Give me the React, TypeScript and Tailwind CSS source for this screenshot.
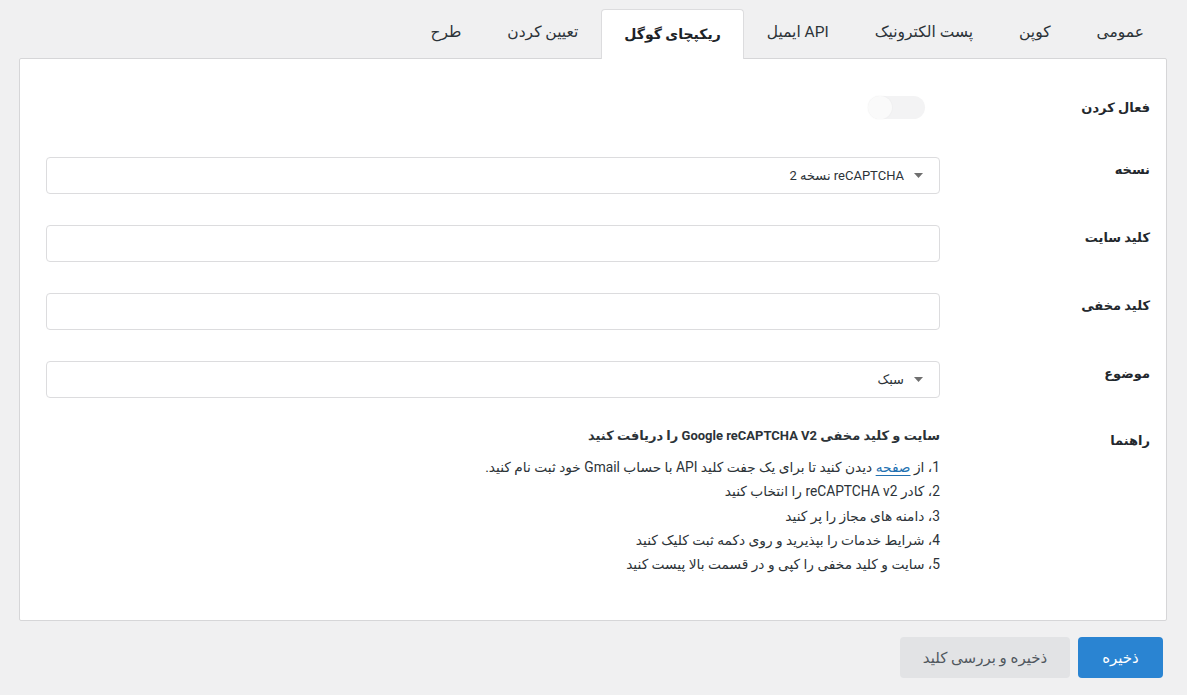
import { useState } from 'react'

const tabs = ['عمومی', 'کوپن', 'پست الکترونیک', 'API ایمیل', 'ریکپچای گوگل', 'تعیین کردن', 'طرح']

const steps = [
  '2، کادر reCAPTCHA v2 را انتخاب کنید',
  '3، دامنه های مجاز را پر کنید',
  '4، شرایط خدمات را بپذیرید و روی دکمه ثبت کلیک کنید',
  '5، سایت و کلید مخفی را کپی و در قسمت بالا پیست کنید',
]

function Row({ label, children }: { label: string; children: React.ReactNode }) {
  return (
    <div className="flex items-start">
      <div className="w-[210px] shrink-0 pt-[3px] text-[13px] font-bold text-[#23282d]">{label}</div>
      <div className="flex-1">{children}</div>
    </div>
  )
}

function Select({ value }: { value: string }) {
  return (
    <div className="h-[37px] w-full bg-white border border-[#dcdcde] rounded-[4px] flex items-center pr-[16px] gap-[10px] text-[13px] text-[#2c3338]">
      <svg width="9" height="5" viewBox="0 0 9 5" className="shrink-0">
        <path d="M0 0h9L4.5 5z" fill="#6f6f6f" />
      </svg>
      <span>{value}</span>
    </div>
  )
}

function Input() {
  return <div className="h-[37px] w-full bg-white border border-[#dcdcde] rounded-[4px]" />
}

export default function App() {
  const [active] = useState(4)

  return (
    <div
      dir="rtl"
      className="min-h-[695px] bg-[#f0f0f1] pt-[8px] pr-[20px] pl-[19px] font-['Roboto','DejaVu_Sans',sans-serif] text-[#2c3338]"
    >
      <div className="flex">
        {tabs.map((t, i) => (
          <div
            key={t}
            className={
              i === active
                ? 'h-[50px] px-[22px] flex items-center text-[14px] font-bold text-[#1d2327] bg-white border border-[#dcdcde] border-b-0 rounded-t-[4px] relative top-[1px]'
                : 'h-[50px] px-[23px] flex items-center text-[15.5px] text-[#2c3338]'
            }
          >
            {t}
          </div>
        ))}
      </div>

      <div className="bg-white border border-[#d6d6d8] rounded-[2px] pt-[30px] pb-[44px] pr-[16px] pl-[26px] flex flex-col gap-[31px]">
        <div className="flex items-center h-[37px]">
          <div className="w-[210px] shrink-0 text-[13px] font-bold text-[#23282d]">فعال کردن</div>
          <div className="w-[57px] h-[23px] mr-[15px] rounded-full bg-[#f3f3f4] flex items-center justify-end">
            <div className="w-[24px] h-[23px] rounded-full bg-[#fafafa] shadow-[0_0_2px_rgba(0,0,0,0.05)]" />
          </div>
        </div>

        <Row label="نسخه">
          <Select value="reCAPTCHA نسخه 2" />
        </Row>
        <Row label="کلید سایت">
          <Input />
        </Row>
        <Row label="کلید مخفی">
          <Input />
        </Row>
        <Row label="موضوع">
          <Select value="سبک" />
        </Row>

        <div className="flex items-start -mt-[3px]">
          <div className="w-[210px] shrink-0 pt-[5px] text-[13px] font-bold text-[#23282d]">راهنما</div>
          <div className="flex-1 text-[13.75px] text-[#2c3338]">
            <div className="font-bold text-[13px] leading-[20px] mb-[9px]">
              سایت و کلید مخفی Google reCAPTCHA V2 را دریافت کنید
            </div>
            <div className="leading-[24.25px]">
              <div>
                1، از{' '}
                <span className="text-[#2271b1] underline underline-offset-[3px]">صفحه</span>
                {' '}دیدن کنید تا برای یک جفت کلید API با حساب Gmail خود ثبت نام کنید.
              </div>
              {steps.map((s) => (
                <div key={s}>{s}</div>
              ))}
            </div>
          </div>
        </div>
      </div>

      <div className="flex gap-[8px] mt-[16px] pr-[4px]">
        <button className="h-[41px] w-[85px] rounded-[4px] bg-[#2a84d2] text-white text-[15px]">ذخیره</button>
        <button className="h-[41px] w-[170px] rounded-[4px] bg-[#e2e3e5] text-[#50575e] text-[15px]">
          ذخیره و بررسی کلید
        </button>
      </div>
    </div>
  )
}
